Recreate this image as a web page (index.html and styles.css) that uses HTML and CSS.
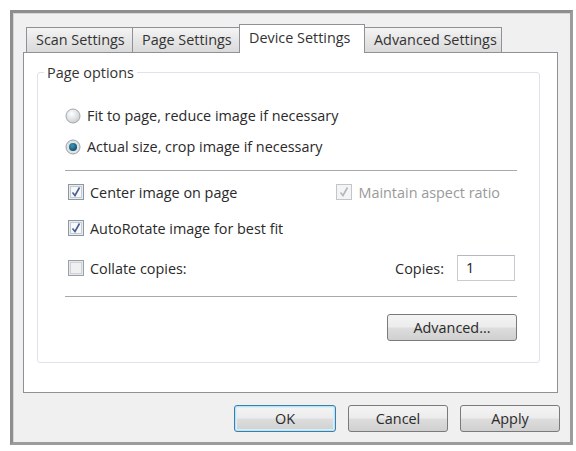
FILE: index.html
```html
<!DOCTYPE html>
<html lang="en">
<head>
<meta charset="UTF-8">
<meta name="viewport" content="width=device-width, initial-scale=1.0">
<link rel="stylesheet" href="styles.css">
<title>Device Settings</title>
</head>
<body>
<div class="dialog">
  <div class="tabs">
    <div class="tab">Scan Settings</div>
    <div class="tab">Page Settings</div>
    <div class="tab active">Device Settings</div>
    <div class="tab">Advanced Settings</div>
  </div>

  <div class="panel">
    <div class="group">
      <span class="group-title">Page options</span>

      <div class="options">
        <div class="row radio-row">
          <svg class="radio" width="16" height="16" viewBox="0 0 16 16">
            <defs>
              <radialGradient id="rg1" cx="0.4" cy="0.35" r="0.7">
                <stop offset="0" stop-color="#ffffff"/>
                <stop offset="1" stop-color="#c9cdd1"/>
              </radialGradient>
            </defs>
            <circle cx="8" cy="8" r="7" fill="url(#rg1)" stroke="#a3a7ab"/>
          </svg>
          <span>Fit to page, reduce image if necessary</span>
        </div>
        <div class="row radio-row">
          <svg class="radio" width="16" height="16" viewBox="0 0 16 16">
            <defs>
              <radialGradient id="rg2" cx="0.4" cy="0.35" r="0.7">
                <stop offset="0" stop-color="#3f98b8"/>
                <stop offset="1" stop-color="#0f4a63"/>
              </radialGradient>
            </defs>
            <circle cx="8" cy="8" r="7" fill="#dfe3e6" stroke="#9aa0a5"/>
            <circle cx="8" cy="8" r="4" fill="url(#rg2)"/>
          </svg>
          <span>Actual size, crop image if necessary</span>
        </div>

        <div class="sep sep-top"></div>

        <div class="row check-row first">
          <div class="check-item">
            <svg class="check" width="16" height="16" viewBox="0 0 16 16">
              <rect x="0.5" y="0.5" width="15" height="15" fill="#e9edf2" stroke="#8e969f"/>
              <rect x="2.5" y="2.5" width="11" height="11" fill="#f6f8fa" stroke="#c4cad1"/>
              <path d="M4.5 8.5 L7 11.5 L11.5 3.5" fill="none" stroke="#4b5f8c" stroke-width="1.6"/>
            </svg>
            <span>Center image on page</span>
          </div>
          <div class="check-item disabled">
            <svg class="check" width="16" height="16" viewBox="0 0 16 16">
              <rect x="0.5" y="0.5" width="15" height="15" fill="#f3f4f5" stroke="#c3c6c9"/>
              <path d="M4.5 8.5 L7 11.5 L11.5 3.5" fill="none" stroke="#b3b7bb" stroke-width="1.6"/>
            </svg>
            <span>Maintain aspect ratio</span>
          </div>
        </div>

        <div class="row check-row second">
          <div class="check-item">
            <svg class="check" width="16" height="16" viewBox="0 0 16 16">
              <rect x="0.5" y="0.5" width="15" height="15" fill="#e9edf2" stroke="#8e969f"/>
              <rect x="2.5" y="2.5" width="11" height="11" fill="#f6f8fa" stroke="#c4cad1"/>
              <path d="M4.5 8.5 L7 11.5 L11.5 3.5" fill="none" stroke="#4b5f8c" stroke-width="1.6"/>
            </svg>
            <span>AutoRotate image for best fit</span>
          </div>
        </div>

        <div class="row check-row third">
          <div class="check-item">
            <svg class="check" width="16" height="16" viewBox="0 0 16 16">
              <rect x="0.5" y="0.5" width="15" height="15" fill="#e4e7ea" stroke="#9aa0a6"/>
              <rect x="2.5" y="2.5" width="11" height="11" fill="#eef0f2" stroke="#d0d4d8"/>
            </svg>
            <span>Collate copies:</span>
          </div>
          <div class="copies">
            <span>Copies:</span>
            <div class="copies-input">1</div>
          </div>
        </div>

        <div class="sep sep-bottom"></div>

        <div class="row advanced-row">
          <button class="btn advanced">Advanced...</button>
        </div>
      </div>
    </div>
  </div>

  <div class="buttons">
    <button class="btn default">OK</button>
    <button class="btn">Cancel</button>
    <button class="btn">Apply</button>
  </div>
</div>
</body>
</html>
```

FILE: styles.css
```css
body {
  margin: 0;
  background: #ffffff;
  font-family: "Open Sans", "Noto Sans", Arial, sans-serif;
  font-size: 14.4px;
  color: #2a2a2a;
}

.dialog {
  margin: 10px 0 0 10px;
  width: 557px;
  height: 429px;
  border: 3px solid #9c9c9c;
  border-top-color: #8e8e8e;
  border-left-color: #8e8e8e;
  background: #f0f0f0;
  box-shadow: inset 1px 1px 0 #d6d6d6;
}

/* tabs */
.tabs {
  display: flex;
  align-items: flex-end;
  margin: 11px 0 0 14px;
  height: 28px;
}

.tab {
  height: 24px;
  line-height: 24px;
  padding: 0 9px;
  border: 1px solid #8e9196;
  border-bottom: 0;
  margin-left: -1px;
  background: linear-gradient(to bottom, #f4f4f4, #e6e6e6 50%, #dadada);
  color: #333;
  box-sizing: content-box;
  white-space: nowrap;
}

.tab:nth-child(1) { width: 87px; }
.tab:nth-child(2) { width: 88px; }
.tab:nth-child(4) { width: 118px; }

.tab.active {
  position: relative;
  z-index: 1;
  width: 106px;
  height: 28px;
  line-height: 26px;
  margin-bottom: -1px;
  background: #ffffff;
}

/* panel */
.panel {
  margin-left: 10px;
  width: 533px;
  height: 320px;
  border: 1px solid #8e9196;
  background: #ffffff;
  padding-top: 19px;
}

.group {
  margin-left: 13px;
  width: 501px;
  height: 289px;
  border: 1px solid #dde3e8;
  border-radius: 3px;
}

.group-title {
  display: block;
  width: fit-content;
  margin: -8px 0 0 6px;
  padding: 0 3px;
  height: 16px;
  line-height: 16px;
  background: #ffffff;
  color: #333;
}

.options {
  padding: 19px 22px 0 27px;
}

.row {
  display: flex;
  align-items: center;
}

.radio-row {
  height: 31px;
}

.radio {
  margin-right: 6px;
  flex: none;
}

.sep {
  height: 1px;
  background: #a9a9a9;
}

.sep-top { margin-top: 8px; }

.check-row {
  height: 28px;
  justify-content: space-between;
}

.check-row.first { margin-top: 7px; }
.check-row.second { margin-top: 8px; }
.check-row.third { margin-top: 12px; }

.check-item {
  display: flex;
  align-items: center;
  margin-left: 3px;
}

.check {
  margin-right: 6px;
  flex: none;
}

.check-item.disabled {
  color: #9a9a9a;
  margin-right: 17px;
}

.copies {
  display: flex;
  align-items: center;
  margin-right: 2px;
}

.copies-input {
  margin-left: 13px;
  width: 48px;
  height: 24px;
  line-height: 24px;
  padding-left: 8px;
  border: 1px solid #c8ccd1;
  border-top-color: #b5b9be;
  background: #ffffff;
  color: #222;
}

.sep-bottom { margin-top: 14px; }

.advanced-row {
  justify-content: flex-end;
  margin-top: 17px;
}

/* buttons */
.btn {
  font-family: inherit;
  font-size: 14.4px;
  color: #2a2a2a;
  height: 27px;
  border: 1px solid #7a7a7a;
  border-radius: 3px;
  background: linear-gradient(to bottom, #f4f4f4, #ececec 48%, #dddddd 52%, #d0d0d0);
  padding: 0;
}

.btn.advanced {
  width: 130px;
}

.buttons {
  display: flex;
  justify-content: flex-end;
  gap: 12px;
  margin: 12px 10px 0 0;
}

.buttons .btn {
  width: 100px;
}

.buttons .btn.default {
  width: 102px;
  border-color: #3d7ea6;
  box-shadow: inset 0 0 0 1px #b8e4f5, inset 0 0 0 2px #d8f0fa;
}
```
